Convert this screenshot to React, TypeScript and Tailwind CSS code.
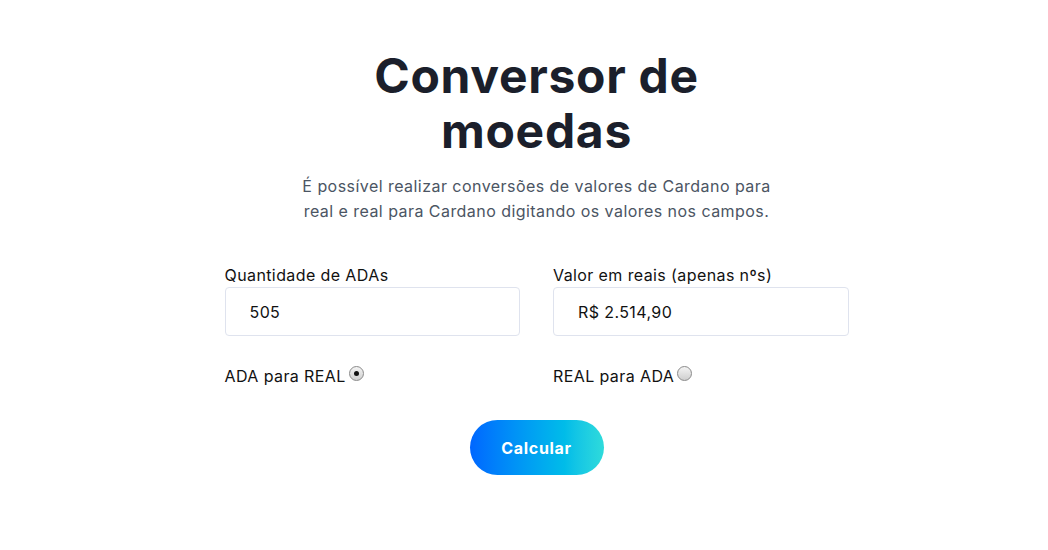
import React from "react";

function Radio({ checked }: { checked: boolean }) {
  return (
    <span className="inline-flex items-center justify-center w-[15px] h-[15px] rounded-full border border-[#8a8a8a] bg-gradient-to-b from-[#f4f4f4] to-[#cfcfcf] ml-[3px] relative top-[-3px]">
      {checked && <span className="w-[5px] h-[5px] rounded-full bg-[#111]" />}
    </span>
  );
}

export default function App() {
  return (
    <div className="w-[1048px] h-[550px] bg-white flex flex-col items-center pl-[25px]" style={{ fontFamily: "Inter, 'Noto Sans', sans-serif" }}>
      <h1 className="mt-[48px] w-[360px] text-center text-[48px] leading-[55px] font-bold text-[#1b1f2b] tracking-[0.7px]">
        Conversor de moedas
      </h1>
      <p className="mt-[16px] w-[480px] text-center text-[16px] leading-[25px] text-[#4b5563] tracking-[0.45px]">
        É possível realizar conversões de valores de Cardano para real e real para Cardano digitando os valores nos campos.
      </p>
      <div className="mt-[39px] grid grid-cols-2 gap-x-[33px] w-[624px] tracking-[0.4px]">
        <div className="flex flex-col">
          <label className="text-[16px] leading-[24px] text-[#111]">Quantidade de ADAs</label>
          <div className="h-[49px] border border-[#dfe3ee] rounded-[4px] flex items-center pl-[24px] text-[16px] text-[#111]">505</div>
          <div className="mt-[28px] flex items-center text-[16px] text-[#111]">
            ADA para REAL<Radio checked />
          </div>
        </div>
        <div className="flex flex-col">
          <label className="text-[16px] leading-[24px] text-[#111]">Valor em reais (apenas nºs)</label>
          <div className="h-[49px] border border-[#dfe3ee] rounded-[4px] flex items-center pl-[24px] text-[16px] text-[#111]">R$ 2.514,90</div>
          <div className="mt-[28px] flex items-center text-[16px] text-[#111]">
            REAL para ADA<Radio checked={false} />
          </div>
        </div>
      </div>
      <button className="mt-[32px] w-[134px] h-[55px] rounded-full bg-gradient-to-r from-[#0066ff] to-[#2edbdb] text-white font-bold text-[16px] tracking-[0.7px]">
        Calcular
      </button>
    </div>
  );
}
